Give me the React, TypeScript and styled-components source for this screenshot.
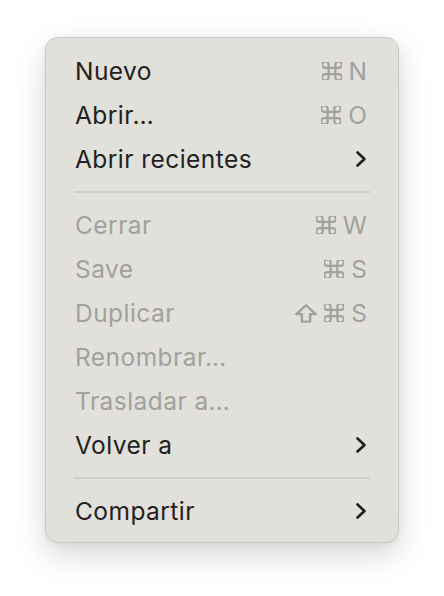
import React from "react";
import styled, { createGlobalStyle } from "styled-components";

const Global = createGlobalStyle`
  html, body { margin: 0; padding: 0; background: #ffffff; }
  body { font-family: Inter, "Noto Sans", "Liberation Sans", sans-serif; }
`;

const Page = styled.div`
  padding: 37px 0 0 45px;
  width: 444px;
  height: 596px;
  box-sizing: border-box;
`;

const Menu = styled.div`
  width: 354px;
  box-sizing: border-box;
  background: #e1e0db;
  border: 1px solid #c9c8c3;
  border-radius: 13px;
  padding: 11px 0 9px;
  display: flex;
  flex-direction: column;
  box-shadow: 0 12px 32px rgba(0, 0, 0, 0.16), 0 2px 6px rgba(0, 0, 0, 0.06);
`;

const Row = styled.div<{ $disabled?: boolean }>`
  height: 44px;
  display: flex;
  align-items: center;
  justify-content: space-between;
  padding: 0 31px 0 29px;
  font-size: 24.5px;
  letter-spacing: 0.45px;
  color: ${(p) => (p.$disabled ? "#a2a19e" : "#222222")};
`;

const Label = styled.span``;

const Shortcut = styled.span`
  display: flex;
  align-items: center;
  gap: 7px;
  color: #a2a19e;
  font-size: 24.5px;
  letter-spacing: 0;
`;

const Key = styled.span`
  display: inline-block;
  text-align: center;
`;

const Separator = styled.div`
  height: 22px;
  display: flex;
  align-items: center;
  padding: 0 28px;
  &::after {
    content: "";
    flex: 1;
    height: 2px;
    background: #cfcec9;
  }
`;

const Cmd = () => (
  <svg width="20" height="18" viewBox="3 3.5 18 17" fill="none" stroke="#a2a19e" strokeWidth="2" preserveAspectRatio="none">
    <path d="M15 6v12a3 3 0 1 0 3-3H6a3 3 0 1 0 3 3V6a3 3 0 1 0-3 3h12a3 3 0 1 0-3-3" />
  </svg>
);

const Shift = () => (
  <svg width="22" height="19" viewBox="4 4 16 15" fill="none" stroke="#a2a19e" strokeWidth="1.8" strokeLinejoin="round" preserveAspectRatio="none">
    <path d="M9 18v-6H5l7-7 7 7h-4v6H9z" />
  </svg>
);

const Chevron = () => (
  <svg width="12" height="18" viewBox="0 0 12 18" fill="none" stroke="#1f1f1f" strokeWidth="2.6" strokeLinecap="round" strokeLinejoin="round">
    <path d="M2.5 2.5l7 6.5-7 6.5" />
  </svg>
);

type Item =
  | { kind: "sep" }
  | { kind: "item"; label: string; disabled?: boolean; keys?: string; shift?: boolean; sub?: boolean };

const items: Item[] = [
  { kind: "item", label: "Nuevo", keys: "N" },
  { kind: "item", label: "Abrir…", keys: "O" },
  { kind: "item", label: "Abrir recientes", sub: true },
  { kind: "sep" },
  { kind: "item", label: "Cerrar", disabled: true, keys: "W" },
  { kind: "item", label: "Save", disabled: true, keys: "S" },
  { kind: "item", label: "Duplicar", disabled: true, keys: "S", shift: true },
  { kind: "item", label: "Renombrar…", disabled: true },
  { kind: "item", label: "Trasladar a…", disabled: true },
  { kind: "item", label: "Volver a", sub: true },
  { kind: "sep" },
  { kind: "item", label: "Compartir", sub: true },
];

export default function App() {
  return (
    <>
      <Global />
      <Page>
        <Menu>
          {items.map((it, i) =>
            it.kind === "sep" ? (
              <Separator key={i} />
            ) : (
              <Row key={i} $disabled={it.disabled}>
                <Label>{it.label}</Label>
                {it.keys && (
                  <Shortcut>
                    {it.shift && <Shift />}
                    <Cmd />
                    <Key>{it.keys}</Key>
                  </Shortcut>
                )}
                {it.sub && <Chevron />}
              </Row>
            )
          )}
        </Menu>
      </Page>
    </>
  );
}
